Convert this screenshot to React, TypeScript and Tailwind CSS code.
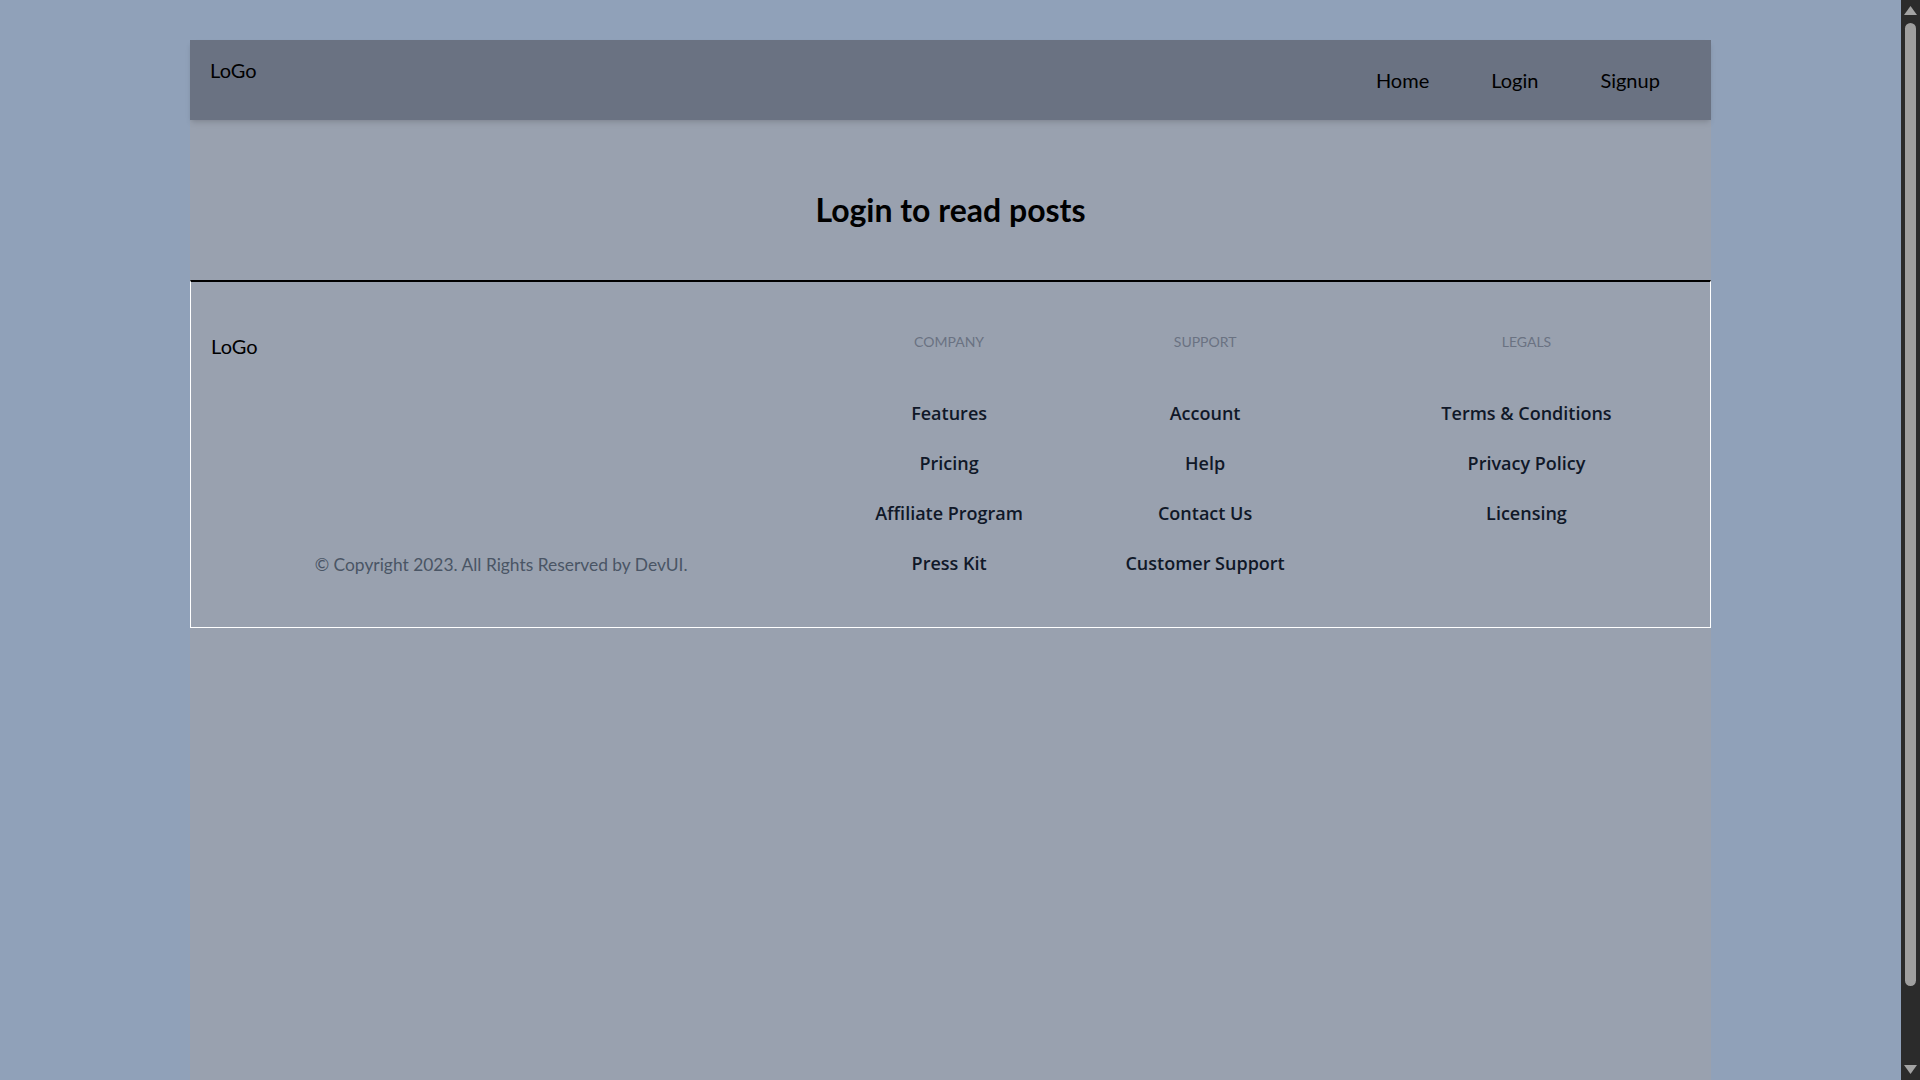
import React from 'react'

const company = ['Features', 'Pricing', 'Affiliate Program', 'Press Kit']
const support = ['Account', 'Help', 'Contact Us', 'Customer Support']
const legals = ['Terms & Conditions', 'Privacy Policy', 'Licensing']

function FooterColumn({ title, links, className = '' }: { title: string; links: string[]; className?: string }) {
  return (
    <div className={`text-center ${className}`}>
      <h3 className="text-sm uppercase text-gray-500">{title}</h3>
      <ul className="mt-[47px] flex flex-col gap-[22px]">
        {links.map((link) => (
          <li key={link}>
            <a href="#" className="font-['Open_Sans',sans-serif] text-lg font-semibold text-gray-900">
              {link}
            </a>
          </li>
        ))}
      </ul>
    </div>
  )
}

// window scrollbar as seen in the screenshot
function Scrollbar() {
  return (
    <div className="flex h-screen w-[19px] shrink-0 flex-col bg-[#2b2b2b]">
      <svg width="19" height="17" viewBox="0 0 19 17" className="shrink-0">
        <polygon points="3,15 9.5,6 16,15" fill="#a3a3a3" />
      </svg>
      <div className="flex-1 px-1 pt-[6px] pb-[77px]">
        <div className="h-full rounded-full bg-[#9f9f9f]" />
      </div>
      <svg width="19" height="17" viewBox="0 0 19 17" className="shrink-0">
        <polygon points="3,2 16,2 9.5,11" fill="#a3a3a3" />
      </svg>
    </div>
  )
}

export default function App() {
  return (
    <div className="flex h-screen bg-slate-400 text-black font-['Lato','Noto_Sans',sans-serif]">
      <div className="h-screen min-w-0 flex-1 overflow-y-auto">
        <div className="py-10">
          <div className="mx-auto min-h-screen w-4/5 bg-gray-400">
            {/* Navbar */}
            <nav className="flex h-20 justify-between bg-gray-500 px-5 shadow-md">
              <div className="self-start pt-4 text-xl">LoGo</div>
              <ul className="flex items-center gap-[62px] pr-[31px] text-xl">
                <li><a href="#">Home</a></li>
                <li><a href="#">Login</a></li>
                <li><a href="#">Signup</a></li>
              </ul>
            </nav>

            {/* Main */}
            <div className="pt-[72px] pb-[52px] text-center">
              <h1 className="text-[32px] leading-9 font-bold">Login to read posts</h1>
            </div>

            {/* Footer */}
            <footer className="border border-white border-t-2 border-t-black px-5 pt-[50px] pb-[50px]">
              <div className="grid grid-cols-[580px_316px_196px_1fr]">
                <div className="flex flex-col justify-between">
                  <div className="text-xl">LoGo</div>
                  <p className="-mb-[2px] text-center text-[17.4px] leading-7 text-gray-600">
                    © Copyright 2023. All Rights Reserved by DevUI.
                  </p>
                </div>
                <FooterColumn title="Company" links={company} />
                <FooterColumn title="Support" links={support} />
                <FooterColumn title="Legals" links={legals} className="pl-[60px]" />
              </div>
            </footer>
          </div>
        </div>
      </div>
      <Scrollbar />
    </div>
  )
}
